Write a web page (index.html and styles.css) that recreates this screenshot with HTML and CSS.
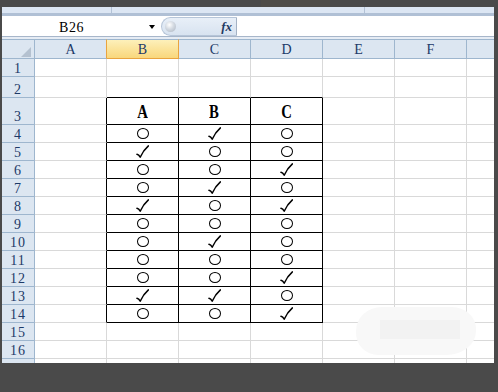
FILE: index.html
```html
<!DOCTYPE html>
<html>
<head>
<meta charset="utf-8">
<link rel="stylesheet" href="styles.css">
</head>
<body>
<div class="top"><div class="topb"></div></div>
<div class="win">
  <div class="ribbon"><span class="rg1"></span><span class="rg2"></span><span class="rg3"></span></div>
  <div class="fbar">
    <div class="namebox"><span class="nbtext">B26</span><span class="arrow"></span></div>
    <div class="pill"><span class="knob"></span><span class="fx">fx</span></div>
    <div class="input"></div>
  </div>
  <div class="sep"></div>
  <div class="sheet">
    <div class="h corner"><span class="tri"></span></div><div class="h ha">A</div><div class="h hs">B</div><div class="h">C</div><div class="h">D</div><div class="h">E</div><div class="h">F</div><div class="h"></div>

    <div class="r">1</div><div class="c"></div><div class="c"></div><div class="c"></div><div class="c"></div><div class="c"></div><div class="c"></div><div class="c"></div>
    <div class="r">2</div><div class="c"></div><div class="c tt"></div><div class="c tt"></div><div class="c tt"></div><div class="c"></div><div class="c"></div><div class="c"></div>
    <div class="r">3</div><div class="c tl"></div><div class="th"><span>A</span></div><div class="th"><span>B</span></div><div class="th"><span>C</span></div><div class="c"></div><div class="c"></div><div class="c"></div>

    <div class="r">4</div><div class="c tl"></div><div class="t"><span class="o"></span></div><div class="t"><svg class="k"><use href="#k"/></svg></div><div class="t"><span class="o"></span></div><div class="c"></div><div class="c"></div><div class="c"></div>
    <div class="r">5</div><div class="c tl"></div><div class="t"><svg class="k"><use href="#k"/></svg></div><div class="t"><span class="o"></span></div><div class="t"><span class="o"></span></div><div class="c"></div><div class="c"></div><div class="c"></div>
    <div class="r">6</div><div class="c tl"></div><div class="t"><span class="o"></span></div><div class="t"><span class="o"></span></div><div class="t"><svg class="k"><use href="#k"/></svg></div><div class="c"></div><div class="c"></div><div class="c"></div>
    <div class="r">7</div><div class="c tl"></div><div class="t"><span class="o"></span></div><div class="t"><svg class="k"><use href="#k"/></svg></div><div class="t"><span class="o"></span></div><div class="c"></div><div class="c"></div><div class="c"></div>
    <div class="r">8</div><div class="c tl"></div><div class="t"><svg class="k"><use href="#k"/></svg></div><div class="t"><span class="o"></span></div><div class="t"><svg class="k"><use href="#k"/></svg></div><div class="c"></div><div class="c"></div><div class="c"></div>
    <div class="r">9</div><div class="c tl"></div><div class="t"><span class="o"></span></div><div class="t"><span class="o"></span></div><div class="t"><span class="o"></span></div><div class="c"></div><div class="c"></div><div class="c"></div>
    <div class="r">10</div><div class="c tl"></div><div class="t"><span class="o"></span></div><div class="t"><svg class="k"><use href="#k"/></svg></div><div class="t"><span class="o"></span></div><div class="c"></div><div class="c"></div><div class="c"></div>
    <div class="r">11</div><div class="c tl"></div><div class="t"><span class="o"></span></div><div class="t"><span class="o"></span></div><div class="t"><span class="o"></span></div><div class="c"></div><div class="c"></div><div class="c"></div>
    <div class="r">12</div><div class="c tl"></div><div class="t"><span class="o"></span></div><div class="t"><span class="o"></span></div><div class="t"><svg class="k"><use href="#k"/></svg></div><div class="c"></div><div class="c"></div><div class="c"></div>
    <div class="r">13</div><div class="c tl"></div><div class="t"><svg class="k"><use href="#k"/></svg></div><div class="t"><svg class="k"><use href="#k"/></svg></div><div class="t"><span class="o"></span></div><div class="c"></div><div class="c"></div><div class="c"></div>
    <div class="r">14</div><div class="c tl"></div><div class="t"><span class="o"></span></div><div class="t"><span class="o"></span></div><div class="t"><svg class="k"><use href="#k"/></svg></div><div class="c"></div><div class="c"></div><div class="c"></div>

    <div class="r">15</div><div class="c"></div><div class="c"></div><div class="c"></div><div class="c"></div><div class="c"></div><div class="c"></div><div class="c"></div>
    <div class="r">16</div><div class="c"></div><div class="c"></div><div class="c"></div><div class="c"></div><div class="c"></div><div class="c"></div><div class="c"></div>
    <div class="r"></div><div class="c"></div><div class="c"></div><div class="c"></div><div class="c"></div><div class="c"></div><div class="c"></div><div class="c"></div>
  </div>
  <div class="blob"><i></i></div>
</div>
<svg class="defs" width="0" height="0">
  <symbol id="k" viewBox="0 0 13 13">
    <path d="M1 9.3 Q2.8 9.6 4.2 12.2 Q7.2 5.5 12.4 0.9" fill="none" stroke="#000" stroke-width="1.5" stroke-linejoin="round" stroke-linecap="round"/>
  </symbol>
</svg>
</body>
</html>
```

FILE: styles.css
```css
html, body {
  margin: 0;
  padding: 0;
}
* {
  box-sizing: border-box;
}
body {
  background: #4a4a4a;
  width: 498px;
  height: 392px;
  overflow: hidden;
}
.top {
  display: flex;
  height: 7px;
}
.topb {
  margin-left: 261px;
  width: 69px;
  background: #4e4c48;
}
.win {
  position: relative;
  margin-left: 2px;
  width: 492px;
  background: #fff;
}
.ribbon {
  display: flex;
  height: 9px;
  background: #dce6f3;
  border-bottom: 3px solid #b0c0d5;
}
.rg1 {
  width: 110px;
  border-right: 1px solid #b3c2d6;
}
.rg2 {
  width: 253px;
  border-right: 1px solid #b3c2d6;
}
.rg3 {
  flex: 1;
}
.fbar {
  display: flex;
  height: 20px;
  background: #fff;
}
.namebox {
  display: flex;
  align-items: flex-start;
  width: 159px;
}
.nbtext {
  width: 139px;
  padding-top: 4px;
  text-align: center;
  font: 14px/16px "Liberation Serif", serif;
  letter-spacing: 0.5px;
  color: #000;
}
.arrow {
  margin-left: 8px;
  margin-top: 9px;
  width: 0;
  height: 0;
  border-left: 3px solid transparent;
  border-right: 3px solid transparent;
  border-top: 4px solid #000;
}
.pill {
  display: flex;
  align-items: center;
  margin-top: 1px;
  width: 76px;
  height: 19px;
  border: 1px solid #b6c5d8;
  border-right-color: #a4b2c4;
  border-radius: 10px 0 0 10px;
  background: linear-gradient(#e8eff8, #d8e3f0);
}
.knob {
  margin-left: 3px;
  width: 11px;
  height: 11px;
  border-radius: 50%;
  background: radial-gradient(circle at 40% 35%, #ffffff 0, #d3d9e1 45%, #a9b3c0 100%);
}
.fx {
  margin-left: auto;
  margin-right: 4px;
  font: italic bold 13px/14px "Liberation Serif", serif;
  color: #1f3b63;
}
.input {
  flex: 1;
}
.sep {
  height: 3px;
  border-top: 1px solid #a7b6ca;
  background: #e6ecf4;
}
.sheet {
  display: grid;
  grid-template-columns: 33px repeat(6, 72px) 27px;
  grid-template-rows: 20px 18px 21px 27px repeat(13, 18px) 4px;
}
.h {
  background: #dce6f1;
  border-top: 1px solid #9eb6ce;
  border-bottom: 1px solid #9eb6ce;
  border-right: 1px solid #9eb6ce;
  padding-top: 2px;
  text-align: center;
  font: 14px/16px "Liberation Serif", serif;
  color: #1d3a68;
}
.ha {
  border-right-color: #e9a43f;
}
.hs {
  background: linear-gradient(#fdf0ba, #f9d77c);
  border-right-color: #e9a43f;
  border-bottom-color: #e9a43f;
}
.corner {
  display: flex;
  justify-content: flex-end;
  align-items: flex-end;
  padding: 0 3px 1px 0;
}
.tri {
  width: 0;
  height: 0;
  border-left: 10px solid transparent;
  border-bottom: 10px solid #b4c1d0;
}
.r {
  display: flex;
  justify-content: center;
  align-items: flex-end;
  padding-bottom: 1px;
  background: #dce6f1;
  border-right: 1px solid #9eb6ce;
  border-bottom: 1px solid #9eb6ce;
  font: 14px/13px "Liberation Serif", serif;
  letter-spacing: 1px;
  color: #1d3a68;
}
.c {
  border-right: 1px solid #d9d9d9;
  border-bottom: 1px solid #d9d9d9;
}
.tt {
  border-bottom-color: #000;
}
.tl {
  border-right-color: #000;
}
.th {
  display: flex;
  justify-content: center;
  align-items: flex-end;
  padding-bottom: 3px;
  border-right: 1px solid #000;
  border-bottom: 1px solid #000;
  font: bold 18px/18px "Liberation Serif", serif;
  color: #000;
}
.th span {
  display: inline-block;
  transform: scaleX(0.82);
}
.t {
  display: flex;
  justify-content: center;
  align-items: center;
  border-right: 1px solid #000;
  border-bottom: 1px solid #000;
}
.o {
  width: 12px;
  height: 11px;
  border: 1.7px solid #000;
  border-radius: 50%;
}
.k {
  width: 13px;
  height: 13px;
}
.sheet > div:nth-child(8n) {
  border-right: 0;
}
.sheet > div:nth-last-child(-n+8) {
  border-bottom: 0;
}
.blob {
  position: absolute;
  left: 354px;
  top: 300px;
  width: 120px;
  height: 48px;
  border-radius: 26px 24px 30px 22px / 24px 22px 24px 22px;
  background: #f8f8f8;
}
.blob i {
  position: absolute;
  left: 24px;
  top: 13px;
  width: 80px;
  height: 19px;
  background: #f2f2f2;
}
.defs {
  display: block;
  width: 0;
  height: 0;
}
```
